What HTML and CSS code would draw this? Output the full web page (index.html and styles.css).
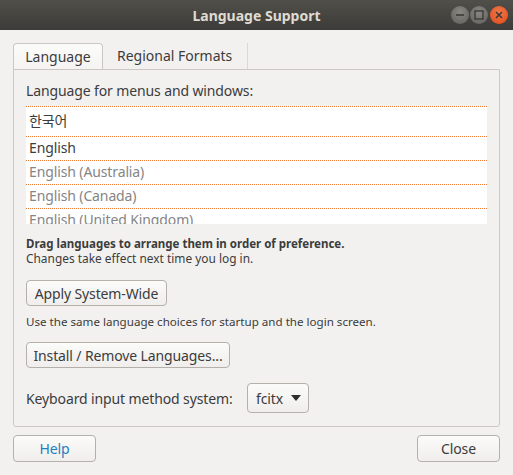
FILE: index.html
```html
<!DOCTYPE html>
<html>
<head>
<meta charset="utf-8">
<link rel="stylesheet" href="styles.css">
</head>
<body>
<div class="window">
  <div class="titlebar">
    <span class="title">Language Support</span>
    <div class="wbtns">
      <span class="wbtn"><svg width="18" height="18" viewBox="0 0 18 18"><line x1="5" y1="9" x2="13" y2="9" stroke="#3c3b37" stroke-width="1.6"/></svg></span>
      <span class="wbtn"><svg width="18" height="18" viewBox="0 0 18 18"><rect x="5" y="5" width="8" height="8" fill="none" stroke="#3c3b37" stroke-width="1.4"/></svg></span>
      <span class="wbtn close"><svg width="18" height="18" viewBox="0 0 18 18"><path d="M6 6 L12 12 M12 6 L6 12" stroke="#3c3b37" stroke-width="1.6"/></svg></span>
    </div>
  </div>
  <div class="content">
    <div class="tabs">
      <div class="tab active">Language</div>
      <div class="tab">Regional Formats</div>
    </div>
    <div class="panel">
      <div class="label">Language for menus and windows:</div>
      <div class="list">
        <div class="row ko">한국어</div>
        <div class="row">English</div>
        <div class="row dim">English (Australia)</div>
        <div class="row dim">English (Canada)</div>
        <div class="row dim">English (United Kingdom)</div>
      </div>
      <div class="hint"><b>Drag languages to arrange them in order of preference.</b><br>Changes take effect next time you log in.</div>
      <div><button class="btn apply">Apply System-Wide</button></div>
      <div class="hint2">Use the same language choices for startup and the login screen.</div>
      <div><button class="btn install">Install / Remove Languages...</button></div>
      <div class="kbrow">
        <span class="kblabel">Keyboard input method system:</span>
        <span class="combo">fcitx <svg width="10" height="6" viewBox="0 0 10 6"><path d="M0 0 H10 L5 6 Z" fill="#2e2e2e"/></svg></span>
      </div>
    </div>
    <div class="bottom">
      <button class="btn dlg help">Help</button>
      <button class="btn dlg">Close</button>
    </div>
  </div>
</div>
</body>
</html>
```

FILE: styles.css
```css
* { box-sizing: border-box; }
html, body { margin: 0; padding: 0; }
body {
  width: 513px; height: 475px; overflow: hidden;
  background: #f2f1f0;
  font-family: "Noto Sans", "Noto Sans CJK KR", sans-serif;
  font-size: 14px;
  letter-spacing: -0.12px;
  color: #3c3c3c;
}
.titlebar {
  height: 30px;
  background: linear-gradient(#504f4a, #3c3b37);
  position: relative;
  display: flex; align-items: center; justify-content: center;
}
.title { color: #dfdbd2; font-weight: bold; font-size: 14px; letter-spacing: 0; }
.wbtns { position: absolute; right: 5px; top: 6px; display: flex; gap: 0; }
.wbtn {
  width: 18px; height: 18px; border-radius: 50%;
  background: radial-gradient(circle at 50% 35%, #8a8883, #5f5e5a);
  margin-left: 1px; display: block;
}
.wbtn svg { display: block; }
.wbtn.close { background: radial-gradient(circle at 50% 35%, #f0774a, #df4a16); margin-left: 2px; }
.content { padding: 13px 13px 0 13px; }
.tabs { display: flex; height: 26px; }
.tab {
  height: 26px; padding: 0 15px 0 14px; line-height: 25px;
  color: #3c3c3c; letter-spacing: 0;
}
.tab.active {
  width: 90px; text-align: center; padding: 0;
  background: linear-gradient(#fbfbfa, #f5f4f3);
  border: 1px solid #cdc7c2; border-bottom: none;
  border-radius: 4px 4px 0 0;
}
.tab:not(.active) { border-right: 1px solid #dcd8d4; }
.panel {
  border: 1px solid #cdc7c2; border-radius: 0 0 3px 3px;
  padding: 12px 12px 13px 12px;
  height: 358px;
}
.label { height: 18px; line-height: 18px; }
.list {
  margin-top: 6px; height: 118px; overflow: hidden; background: #fff;
}
.row {
  border-top: 1px dotted #f37a32;
  height: 24px; line-height: 22px; padding-left: 3px;
  white-space: nowrap;
}
.row.ko { height: 30px; line-height: 28px; }
.row.dim { color: #858585; }
.hint { margin-top: 12px; font-size: 11.9px; line-height: 15px; letter-spacing: 0; }
.hint b { font-size: 11.5px; }
.btn {
  font-family: inherit; font-size: 14px; color: #3c3c3c; letter-spacing: -0.12px;
  background: linear-gradient(#fbfbfa, #efeeec);
  border: 1px solid #b6b0ab; border-radius: 4px;
  height: 26px; padding: 0; margin: 0;
  white-space: nowrap; display: block;
}
.apply { margin-top: 14px; width: 141px; }
.hint2 { margin-top: 8px; font-size: 11.6px; line-height: 15px; letter-spacing: 0; }
.install { margin-top: 13px; width: 204px; }
.kbrow { margin-top: 15px; height: 30px; display: flex; align-items: center; gap: 9px; white-space: nowrap; }
.kblabel { width: 212px; }
.combo {
  height: 30px; width: 62px; border: 1px solid #b6b0ab; border-radius: 4px;
  background: linear-gradient(#fbfbfa, #efeeec);
  display: flex; align-items: center; gap: 8px; padding-left: 8px;
}
.bottom { display: flex; justify-content: space-between; margin-top: 8px; }
.dlg { width: 83px; height: 27px; }
.help { color: #1d80c0; }
```
